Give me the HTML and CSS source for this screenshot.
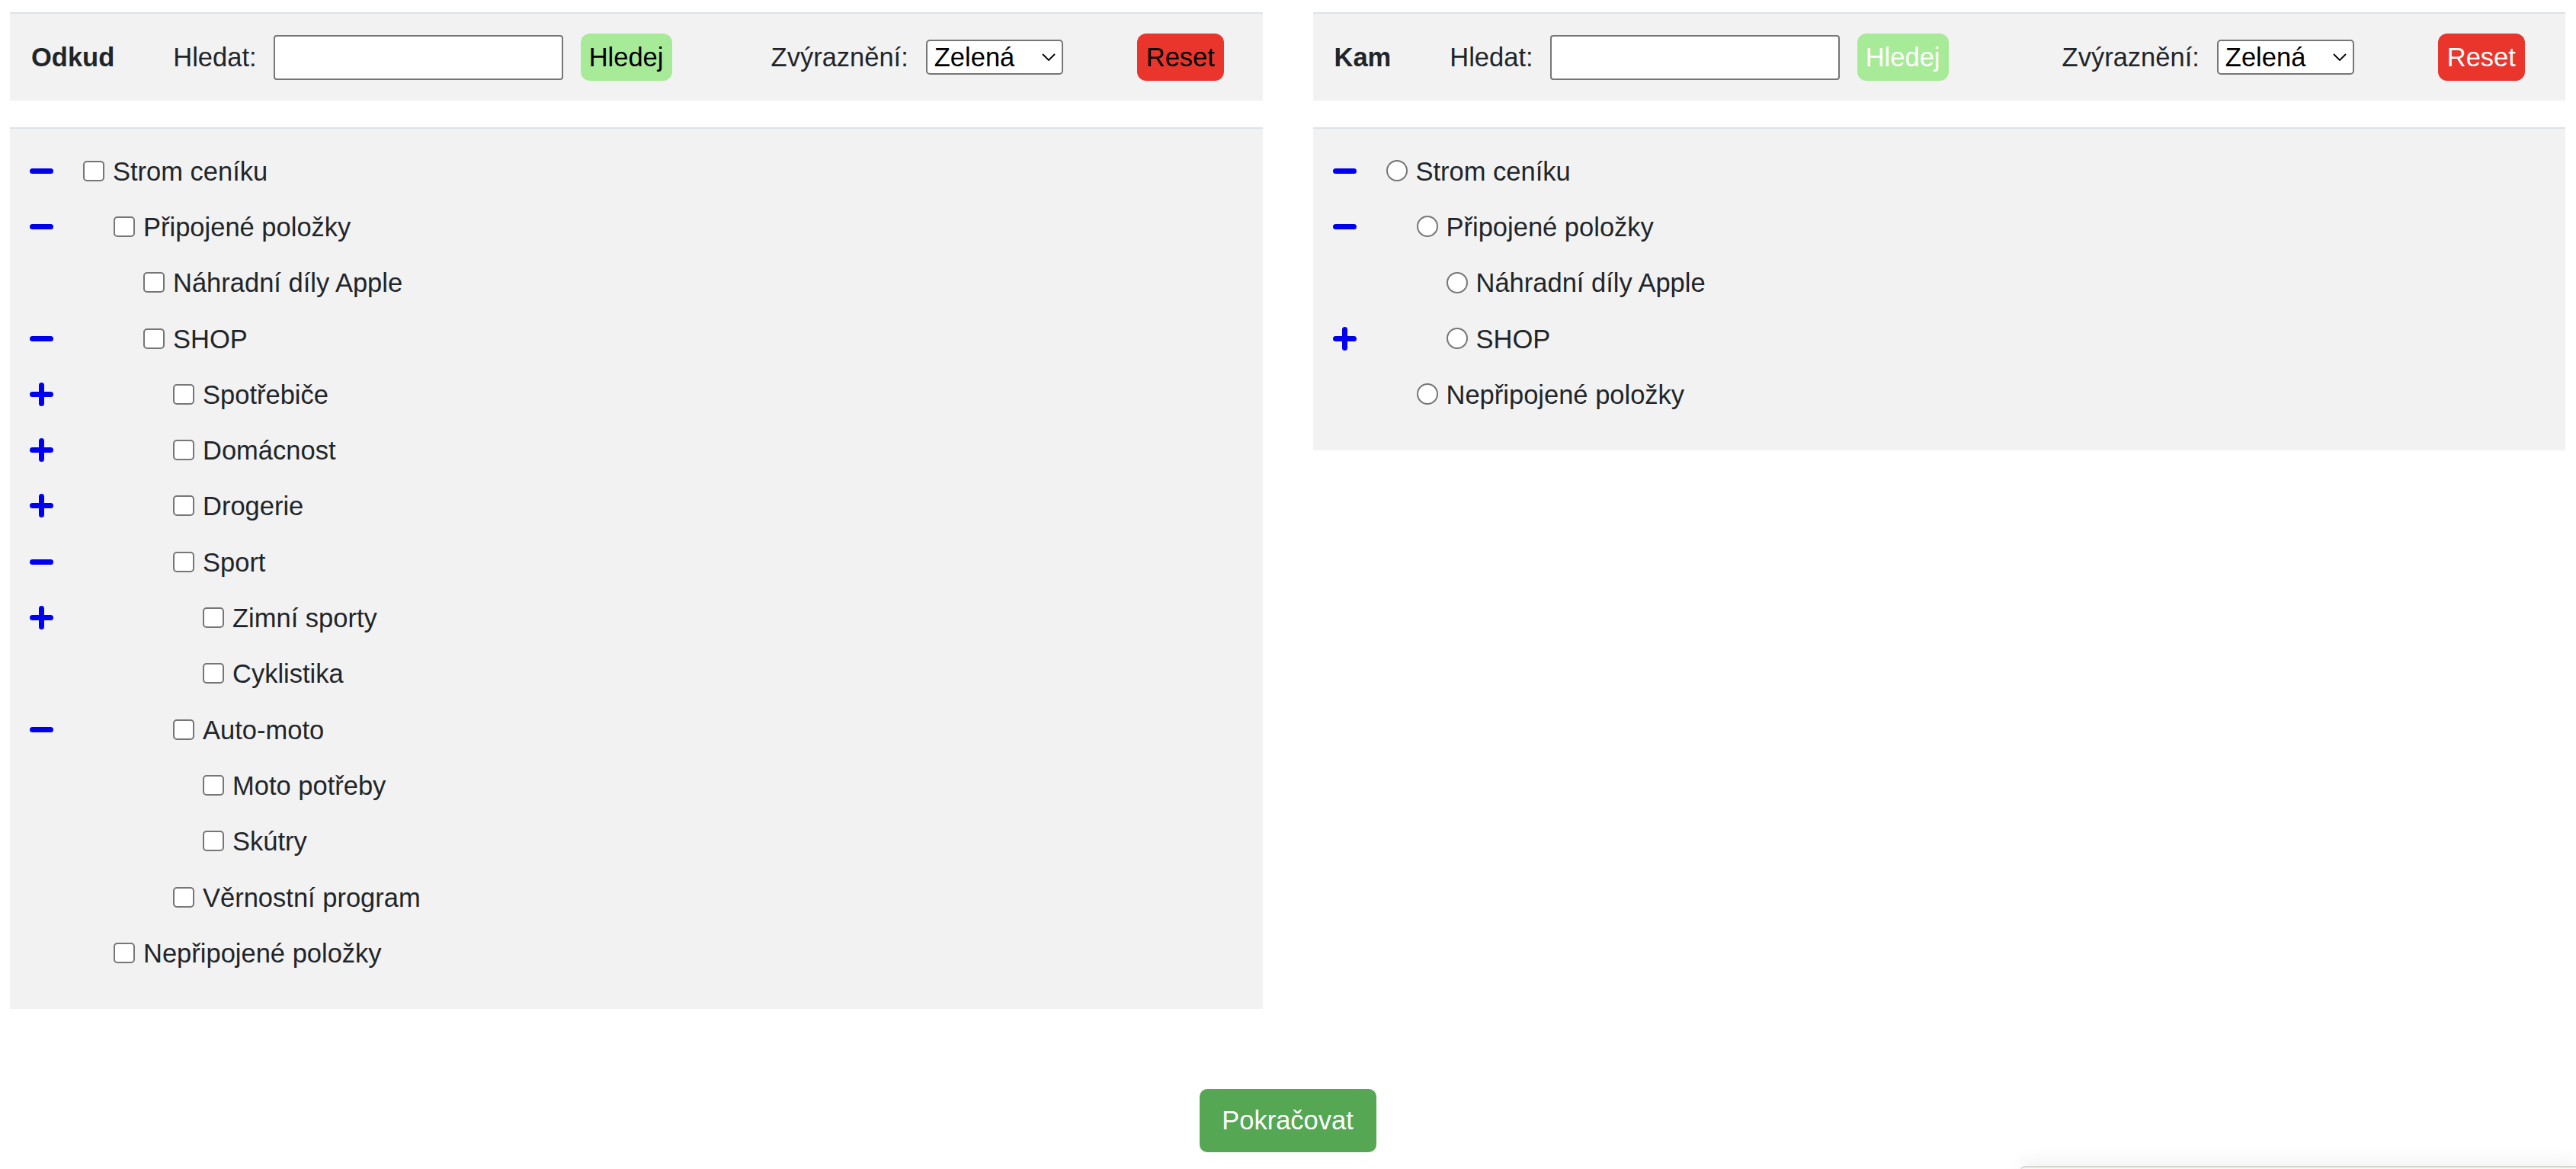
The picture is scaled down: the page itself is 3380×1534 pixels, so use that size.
FILE: index.html
```html
<!DOCTYPE html>
<html lang="cs">
<head>
<meta charset="utf-8">
<title>Přesun položek</title>
<link rel="stylesheet" href="styles.css">
</head>
<body>
<div class="page">
  <div class="columns">
    <section class="col">
      <div class="toolbar toolbar--from">
        <strong class="title">Odkud</strong>
        <label class="lbl">Hledat:</label>
        <input class="search" type="text">
        <button class="btn btn-find">Hledej</button>
        <span class="lbl hl-label">Zvýraznění:</span>
        <div class="select-wrap">
          <select class="select"><option>Zelená</option></select>
          <svg class="chev" viewBox="0 0 18 10"><path d="M1 1L9 9L17 1"/></svg>
        </div>
        <button class="btn btn-reset">Reset</button>
      </div>
      <div class="tree">
        <div class="row"><span class="tog"><svg class="ico" viewBox="0 0 31 31"><path d="M3.5 15.5H27.5"/></svg></span><span class="node l0"><input class="cb" type="checkbox"><span class="txt">Strom ceníku</span></span></div>
        <div class="row"><span class="tog"><svg class="ico" viewBox="0 0 31 31"><path d="M3.5 15.5H27.5"/></svg></span><span class="node l1"><input class="cb" type="checkbox"><span class="txt">Připojené položky</span></span></div>
        <div class="row"><span class="tog"></span><span class="node l2"><input class="cb" type="checkbox"><span class="txt">Náhradní díly Apple</span></span></div>
        <div class="row"><span class="tog"><svg class="ico" viewBox="0 0 31 31"><path d="M3.5 15.5H27.5"/></svg></span><span class="node l2"><input class="cb" type="checkbox"><span class="txt">SHOP</span></span></div>
        <div class="row"><span class="tog"><svg class="ico" viewBox="0 0 31 31"><path d="M3.5 15.5H27.5M15.5 3.5V27.5"/></svg></span><span class="node l3"><input class="cb" type="checkbox"><span class="txt">Spotřebiče</span></span></div>
        <div class="row"><span class="tog"><svg class="ico" viewBox="0 0 31 31"><path d="M3.5 15.5H27.5M15.5 3.5V27.5"/></svg></span><span class="node l3"><input class="cb" type="checkbox"><span class="txt">Domácnost</span></span></div>
        <div class="row"><span class="tog"><svg class="ico" viewBox="0 0 31 31"><path d="M3.5 15.5H27.5M15.5 3.5V27.5"/></svg></span><span class="node l3"><input class="cb" type="checkbox"><span class="txt">Drogerie</span></span></div>
        <div class="row"><span class="tog"><svg class="ico" viewBox="0 0 31 31"><path d="M3.5 15.5H27.5"/></svg></span><span class="node l3"><input class="cb" type="checkbox"><span class="txt">Sport</span></span></div>
        <div class="row"><span class="tog"><svg class="ico" viewBox="0 0 31 31"><path d="M3.5 15.5H27.5M15.5 3.5V27.5"/></svg></span><span class="node l4"><input class="cb" type="checkbox"><span class="txt">Zimní sporty</span></span></div>
        <div class="row"><span class="tog"></span><span class="node l4"><input class="cb" type="checkbox"><span class="txt">Cyklistika</span></span></div>
        <div class="row"><span class="tog"><svg class="ico" viewBox="0 0 31 31"><path d="M3.5 15.5H27.5"/></svg></span><span class="node l3"><input class="cb" type="checkbox"><span class="txt">Auto-moto</span></span></div>
        <div class="row"><span class="tog"></span><span class="node l4"><input class="cb" type="checkbox"><span class="txt">Moto potřeby</span></span></div>
        <div class="row"><span class="tog"></span><span class="node l4"><input class="cb" type="checkbox"><span class="txt">Skútry</span></span></div>
        <div class="row"><span class="tog"></span><span class="node l3"><input class="cb" type="checkbox"><span class="txt">Věrnostní program</span></span></div>
        <div class="row"><span class="tog"></span><span class="node l1"><input class="cb" type="checkbox"><span class="txt">Nepřipojené položky</span></span></div>
      </div>
    </section>
    <section class="col">
      <div class="toolbar toolbar--to">
        <strong class="title">Kam</strong>
        <label class="lbl">Hledat:</label>
        <input class="search" type="text">
        <button class="btn btn-find">Hledej</button>
        <span class="lbl hl-label">Zvýraznění:</span>
        <div class="select-wrap">
          <select class="select"><option>Zelená</option></select>
          <svg class="chev" viewBox="0 0 18 10"><path d="M1 1L9 9L17 1"/></svg>
        </div>
        <button class="btn btn-reset">Reset</button>
      </div>
      <div class="tree">
        <div class="row"><span class="tog"><svg class="ico" viewBox="0 0 31 31"><path d="M3.5 15.5H27.5"/></svg></span><span class="node l0"><input class="cb rb" type="radio" name="to"><span class="txt">Strom ceníku</span></span></div>
        <div class="row"><span class="tog"><svg class="ico" viewBox="0 0 31 31"><path d="M3.5 15.5H27.5"/></svg></span><span class="node l1"><input class="cb rb" type="radio" name="to"><span class="txt">Připojené položky</span></span></div>
        <div class="row"><span class="tog"></span><span class="node l2"><input class="cb rb" type="radio" name="to"><span class="txt">Náhradní díly Apple</span></span></div>
        <div class="row"><span class="tog"><svg class="ico" viewBox="0 0 31 31"><path d="M3.5 15.5H27.5M15.5 3.5V27.5"/></svg></span><span class="node l2"><input class="cb rb" type="radio" name="to"><span class="txt">SHOP</span></span></div>
        <div class="row"><span class="tog"></span><span class="node l1"><input class="cb rb" type="radio" name="to"><span class="txt">Nepřipojené položky</span></span></div>
      </div>
    </section>
  </div>
  <div class="actions">
    <button class="btn btn-go">Pokračovat</button>
  </div>
</div>
<div class="corner-widget"></div>
</body>
</html>
```
FILE: styles.css
```css
html, body {
  margin: 0;
  padding: 0;
  background: #ffffff;
}
body {
  font-family: "Liberation Sans", Arial, Helvetica, sans-serif;
  font-size: 34.5px;
  color: #212529;
  overflow: hidden;
}
.page {
  padding: 16px 14px 0 13px;
}
.columns {
  display: grid;
  grid-template-columns: 1fr 1fr;
  column-gap: 66px;
  align-items: start;
}
.toolbar {
  box-sizing: border-box;
  height: 116px;
  background: #f2f2f2;
  border-top: 2px solid #dfe2e6;
  display: flex;
  align-items: center;
  padding-left: 28px;
}
.title {
  font-weight: bold;
  margin-right: 77px;
}
.lbl {
  white-space: nowrap;
}
.search {
  box-sizing: border-box;
  width: 380px;
  height: 59px;
  margin: 0 0 0 22px;
  padding: 0 8px;
  border: 2px solid #767676;
  border-radius: 4px;
  background: #ffffff;
  font: inherit;
}
.btn {
  font: inherit;
  border: 0;
  padding: 0;
  cursor: pointer;
}
.btn-find {
  margin-left: 23px;
  width: 120px;
  height: 62px;
  border-radius: 12px;
  background: #a7eb99;
  color: #000000;
}
.toolbar--to .btn-find {
  color: #ffffff;
}
.hl-label {
  margin-left: 130px;
}
.toolbar--to .hl-label {
  margin-left: 149px;
}
.select-wrap {
  position: relative;
  margin-left: 23px;
  width: 180px;
  height: 46px;
}
.select {
  -webkit-appearance: none;
  appearance: none;
  box-sizing: border-box;
  width: 100%;
  height: 100%;
  margin: 0;
  padding: 0 0 0 9px;
  border: 2px solid #767676;
  border-radius: 5px;
  background: #ffffff;
  color: #000000;
  font: inherit;
  line-height: 42px;
}
.chev {
  position: absolute;
  right: 10px;
  top: 18px;
  width: 18px;
  height: 10px;
  fill: none;
  stroke: #000000;
  stroke-width: 1.8;
  pointer-events: none;
}
.btn-reset {
  margin-left: 97px;
  width: 114px;
  height: 62px;
  border-radius: 12px;
  background: #e9352b;
  color: #000000;
}
.toolbar--to .btn-reset {
  margin-left: 110px;
  color: #ffffff;
}
.tree {
  margin-top: 35px;
  background: #f2f2f2;
  border-top: 2px solid #dfe2e6;
  padding: 18.5px 0 37px 26px;
}
.row {
  height: 73.3px;
  display: flex;
  align-items: center;
}
.tog {
  flex: none;
  width: 70px;
  display: flex;
  align-items: center;
}
.ico {
  width: 31px;
  height: 31px;
  fill: none;
  stroke: #0000ee;
  stroke-width: 7;
  stroke-linecap: round;
}
.node {
  display: flex;
  align-items: center;
}
.l1 { margin-left: 40px; }
.l2 { margin-left: 79px; }
.l3 { margin-left: 118px; }
.l4 { margin-left: 157px; }
.cb {
  -webkit-appearance: none;
  appearance: none;
  box-sizing: border-box;
  flex: none;
  width: 28px;
  height: 27px;
  margin: 0 11px 0 0;
  border: 2px solid #767676;
  border-radius: 5px;
  background: #ffffff;
}
.rb {
  height: 28px;
  border-radius: 50%;
}
.txt {
  white-space: nowrap;
  position: relative;
  top: 1px;
}
.actions {
  display: flex;
  justify-content: center;
  margin-top: 105px;
}
.btn-go {
  width: 232px;
  height: 83px;
  border-radius: 10px;
  background: #55a753;
  color: #ffffff;
}
.corner-widget {
  position: fixed;
  left: 2650px;
  right: 0;
  top: 1530px;
  height: 40px;
  background: #f7f7f4;
  border-top: 2px solid #d4d4d0;
  border-top-left-radius: 8px;
  box-shadow: 0 -8px 24px rgba(0, 0, 0, 0.05);
}
```
